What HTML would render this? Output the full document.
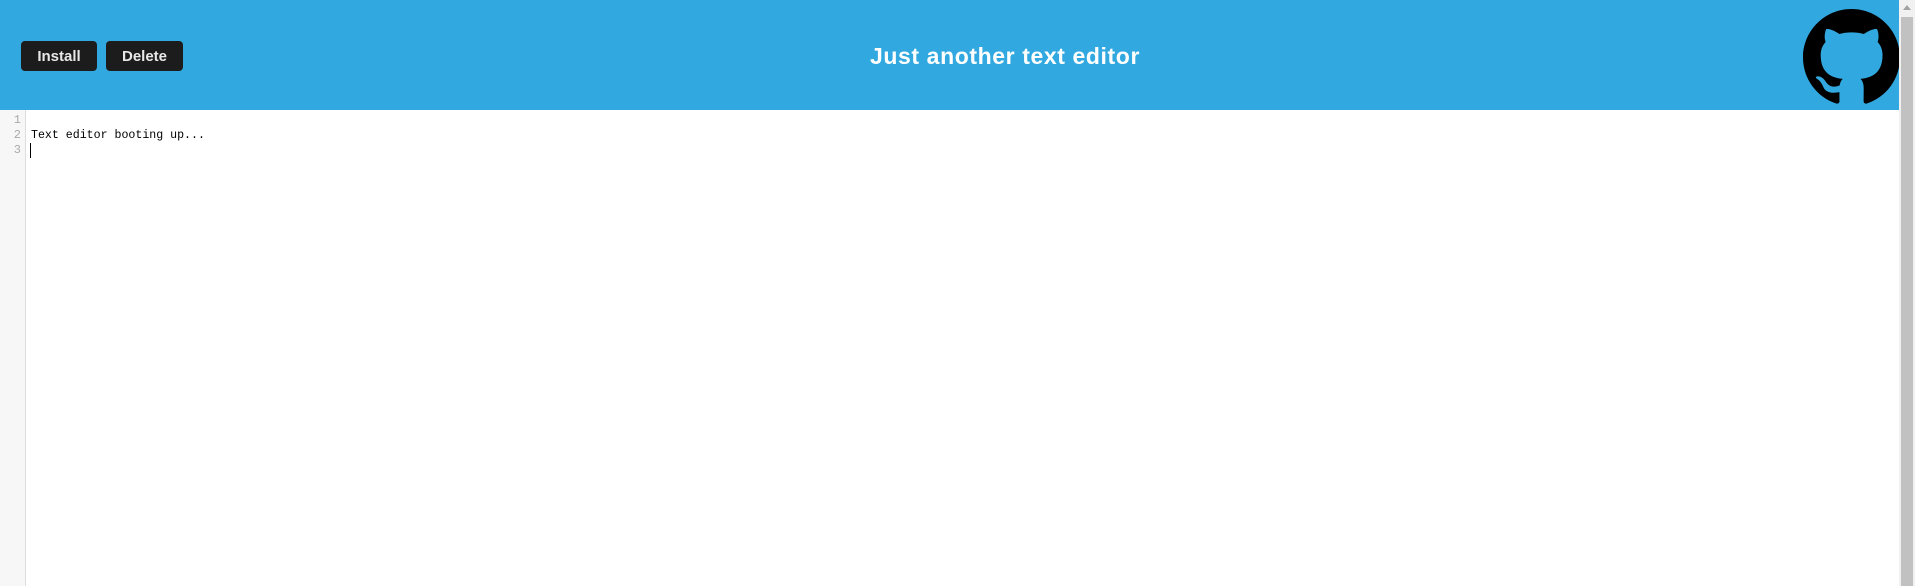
<!DOCTYPE html>
<html><head><style>
html,body{margin:0;padding:0;width:1915px;height:586px;overflow:hidden;background:#fff;font-family:"Liberation Sans",sans-serif}
.hdr{position:absolute;left:0;top:0;width:1899px;height:110px;background:#31a9e0}
.btn{position:absolute;top:41px;height:30px;background:#1c1c1c;border-radius:4px;color:#e8e8e8;font-weight:bold;font-size:15px;line-height:31px;text-align:center}
.title{position:absolute;left:0;width:2010px;top:43px;text-align:center;color:#fff;font-weight:bold;font-size:23px;letter-spacing:0.6px}
.gut{position:absolute;left:0;top:110px;width:25px;height:476px;background:#f7f7f7;border-right:1px solid #ddd}
.ln{position:absolute;left:0;width:21px;text-align:right;color:#aaa;font-family:"Liberation Mono",monospace;font-size:12px;line-height:15px}
.txt{position:absolute;left:31px;top:128px;font-family:"Liberation Mono",monospace;font-size:11.6px;line-height:15px;color:#000}
.cur{position:absolute;left:30px;top:143px;width:1px;height:15px;background:#000}
.sb{position:absolute;left:1899px;top:0;width:16px;height:586px;background:#f1f1f1}
.th{position:absolute;left:1901px;top:17px;width:12px;height:569px;background:#c1c1c1}
</style></head><body>
<div class="hdr">
<div class="btn" style="left:21px;width:76px">Install</div>
<div class="btn" style="left:106px;width:77px">Delete</div>
<div class="title">Just another text editor</div>
<svg style="position:absolute;left:1803px;top:9px" width="97" height="97" viewBox="0 0 16 16"><path fill="#000" d="M8 0C3.58 0 0 3.58 0 8c0 3.54 2.29 6.53 5.47 7.59.4.07.55-.17.55-.38 0-.19-.01-.82-.01-1.49-2.01.37-2.530-.49-2.69-.94-.09-.23-.48-.94-.82-1.130-.28-.15-.68-.52-.01-.53.63-.01 1.08.58 1.23.82.72 1.21 1.87.87 2.33.66.07-.52.28-.87.51-1.07-1.78-.2-3.64-.89-3.64-3.95 0-.87.31-1.59.82-2.15-.08-.2-.36-1.02.08-2.12 0 0 .67-.21 2.2.82.64-.18 1.32-.27 2-.27.68 0 1.36.09 2 .27 1.53-1.04 2.2-.82 2.2-.82.44 1.1.16 1.92.08 2.12.51.56.82 1.27.82 2.15 0 3.07-1.87 3.75-3.65 3.95.29.25.54.73.54 1.48 0 1.07-.01 1.93-.01 2.2 0 .21.15.46.55.38A8.013 8.013 0 0016 8c0-4.42-3.58-8-8-8z"/></svg>
</div>
<div class="gut"></div>
<div class="ln" style="top:113px">1</div>
<div class="ln" style="top:128px">2</div>
<div class="ln" style="top:143px">3</div>
<div class="txt">Text editor booting up...</div>
<div class="cur"></div>
<div class="sb"></div><div class="th"></div>
<div style="position:absolute;left:1903px;top:5px;width:0;height:0;border-left:4px solid transparent;border-right:4px solid transparent;border-bottom:5px solid #a3a3a3"></div>
</body></html>
